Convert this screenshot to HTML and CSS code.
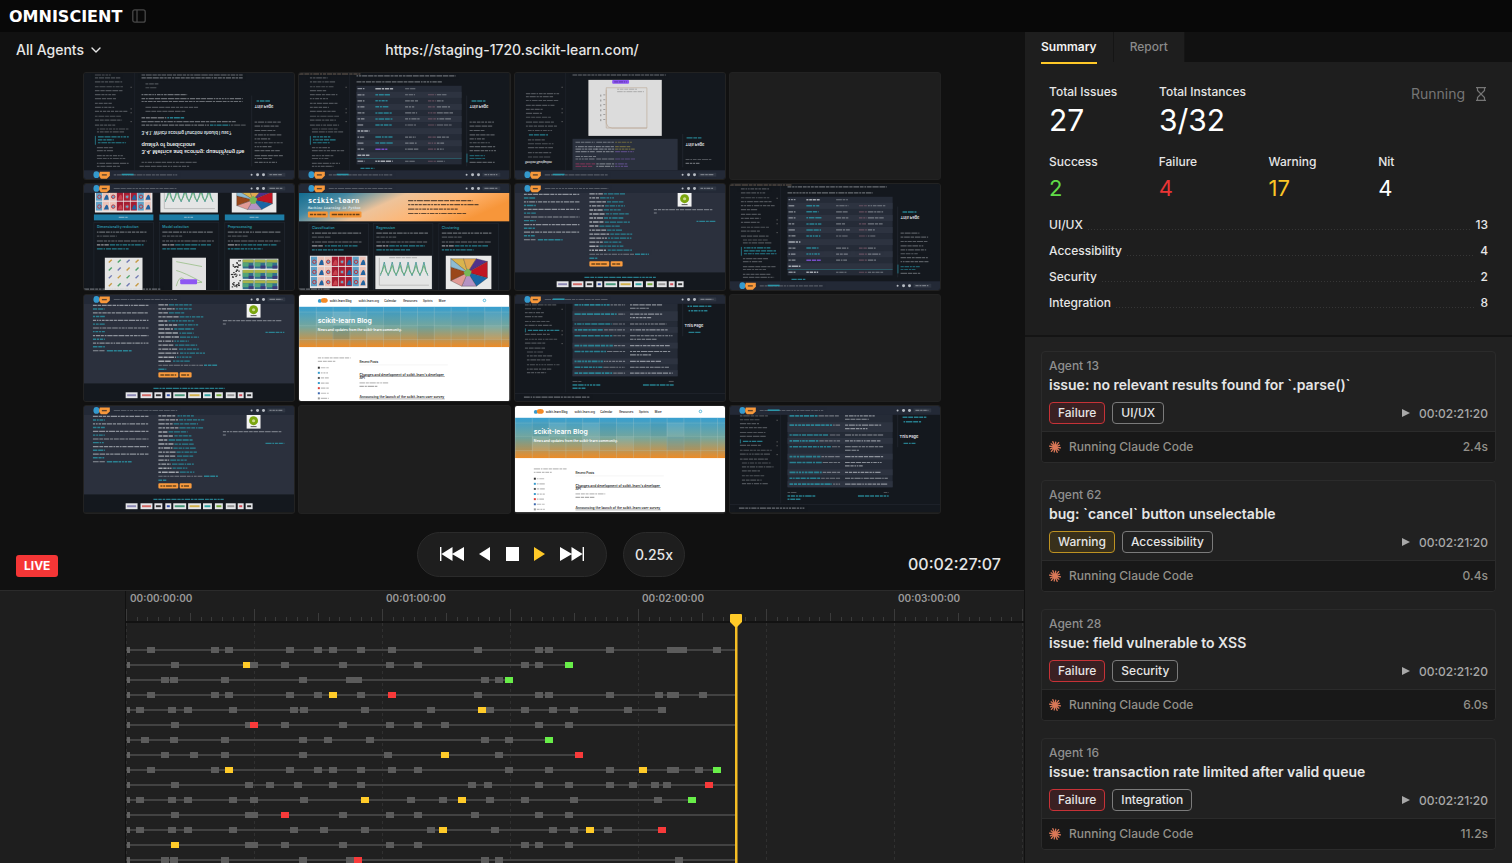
FILE: index.html
```html
<!DOCTYPE html>
<html lang="en">
<head>
<meta charset="utf-8">
<meta name="viewport" content="width=device-width, initial-scale=1">
<title>Omniscient</title>
<link rel="stylesheet" href="styles.css">
</head>
<body>
<div class="app">
  <header class="topbar">
    <h1 class="brand">OMNISCIENT</h1>
    <button class="icon-button" type="button" aria-label="Toggle sidebar">
      <svg width="14" height="14" viewBox="0 0 14 14" fill="none" stroke="#484848" stroke-width="1.3"><rect x="0.8" y="0.8" width="12.4" height="12.4" rx="2"/><path d="M5 1v12"/></svg>
    </button>
  </header>

  <div class="workspace">
    <main class="stage">
      <div class="stage-head">
        <button class="agents" type="button">All Agents
          <svg width="10" height="6" viewBox="0 0 10 6" fill="none" stroke="currentColor" stroke-width="1.4" stroke-linecap="round" stroke-linejoin="round"><path d="M1 1l4 4 4-4"/></svg>
        </button>
        <a class="url" href="#stage">https://staging-1720.scikit-learn.com/</a>
      </div>

      <div class="feeds" id="stage"></div>

      <div class="controls">
        <span class="live">LIVE</span>
        <div class="transport">
          <button type="button" aria-label="Skip to start"><svg width="24" height="14" viewBox="0 0 24 14" fill="currentColor"><path d="M0 0h1.4v14H0zM12.5 0v14L1.4 7zM24 0v14L12 7z"/></svg></button>
          <button type="button" aria-label="Play backward"><svg width="11" height="14" viewBox="0 0 11 14" fill="currentColor"><path d="M11 0v14L0 7z"/></svg></button>
          <button type="button" aria-label="Stop"><svg width="13" height="14" viewBox="0 0 13 14" fill="currentColor"><path d="M0 0h13v14H0z"/></svg></button>
          <button class="on" type="button" aria-label="Play"><svg width="11" height="14" viewBox="0 0 11 14" fill="currentColor"><path d="M0 0v14l11-7z"/></svg></button>
          <button type="button" aria-label="Skip to end"><svg width="24" height="14" viewBox="0 0 24 14" fill="currentColor"><path d="M22.6 0H24v14h-1.4zM11.5 0v14l11.1-7zM0 0v14l12-7z"/></svg></button>
        </div>
        <div class="controls-end">
          <button class="speed" type="button">0.25x</button>
          <span class="clock">00:02:27:07</span>
        </div>
      </div>

      <section class="timeline" aria-label="Timeline">
        <div class="track-labels"></div>
        <div class="tracks">
          <svg class="ruler" id="ruler" height="32"></svg>
          <svg class="lanes" id="lanes"></svg>
          <svg class="playhead" width="12" height="252" viewBox="0 0 12 252"><path d="M5 8h2.5v244H5z" fill="#f5bd24"/><path d="M0 1q0-1 1-1h10q1 0 1 1v7l-5 5H5L0 8z" fill="#ffca28"/></svg>
        </div>
      </section>
    </main>

    <aside class="side">
      <nav class="tabs">
        <button class="tab active" type="button"><span>Summary</span></button>
        <button class="tab" type="button"><span>Report</span></button>
      </nav>
      <section class="summary">
        <div class="totals">
          <dl class="stat big"><dt>Total Issues</dt><dd>27</dd></dl>
          <dl class="stat big"><dt>Total Instances</dt><dd>3/32</dd></dl>
          <p class="state">Running
            <svg width="10" height="14" viewBox="0 0 10 14" fill="none" stroke="currentColor" stroke-width="1.2"><path d="M0 .7h10M0 13.3h10M1.500 1v2.500L8.500 10.500V13M8.500 1v2.500L1.500 10.500V13"/></svg>
          </p>
        </div>
        <div class="counts">
          <dl class="stat"><dt>Success</dt><dd class="green">2</dd></dl>
          <dl class="stat"><dt>Failure</dt><dd class="red">4</dd></dl>
          <dl class="stat"><dt>Warning</dt><dd class="yellow">17</dd></dl>
          <dl class="stat"><dt>Nit</dt><dd>4</dd></dl>
        </div>
        <ul class="breakdown">
          <li><span>UI/UX</span><i></i><span>13</span></li>
          <li><span>Accessibility</span><i></i><span>4</span></li>
          <li><span>Security</span><i></i><span>2</span></li>
          <li><span>Integration</span><i></i><span>8</span></li>
        </ul>
      </section>
      <section class="issues" id="issues"></section>
    </aside>
  </div>
</div>
<script src="app.js"></script>
</body>
</html>
```

FILE: styles.css
```css
* { box-sizing: border-box; }
body {
  margin: 0;
  background: #111;
  color: #e6e6e6;
  font-family: Inter, "Liberation Sans", sans-serif;
  font-size: 12px;
  font-weight: 500;
}
button { margin: 0; padding: 0; border: 0; background: none; color: inherit; font: inherit; }
svg { display: block; }
h1, h2, p, dl, dd, ul { margin: 0; padding: 0; }
.app { display: flex; flex-direction: column; height: 100vh; overflow: hidden; }

.topbar { display: flex; align-items: center; gap: 10px; height: 32px; padding: 0 9px; background: #080808; flex: none; }
.brand { font: 700 16px "DejaVu Sans", sans-serif; color: #fff; }

.workspace { display: flex; flex: 1; min-height: 0; }
.stage { display: flex; flex-direction: column; flex: 1; min-width: 0; }
.stage-head { display: grid; grid-template-columns: 1fr auto 1fr; align-items: center; height: 35px; padding: 0 16px; flex: none; font-size: 14px; }
.agents { display: flex; align-items: center; gap: 7px; }
.url { color: #e6e6e6; text-decoration: none; }

.feeds { display: grid; grid-template-columns: repeat(4, 1fr); gap: 3px; width: 84%; max-width: 858px; margin: 5px auto 0; flex: none; }
.feed { aspect-ratio: 212 / 108; border: 1px solid #222; border-radius: 3px; overflow: hidden; background: #1e1e1e; }
.feed svg { width: 100%; height: 100%; }
.feed .sans { font-family: Inter, sans-serif; font-weight: 600; }
.feed .mono { font-family: "DejaVu Sans Mono", monospace; font-weight: 700; }

.controls { display: grid; grid-template-columns: 1fr auto 1fr; align-items: end; padding: 18px 16px 13px; flex: none; }
.live { justify-self: start; padding: 0 8px; border-radius: 3px; background: #f53636; color: #fff; font-weight: 700; line-height: 22px; }
.transport { display: flex; align-items: center; justify-content: space-between; width: 190px; height: 45px; padding: 0 22px; border: 1px solid #2b2b2b; border-radius: 23px; background: #1e1e1e; color: #fff; }
.transport .on { color: #ffc928; }
.controls-end { display: flex; align-items: center; justify-content: space-between; padding: 0 7px 0 16px; }
.speed { width: 62px; height: 45px; border: 1px solid #2b2b2b; border-radius: 23px; background: #1e1e1e; font-size: 14px; }
.clock { align-self: end; font-size: 16px; line-height: 25px; }

.timeline { display: flex; flex: 1; min-height: 0; border-top: 1px solid #2b2b2b; }
.track-labels { width: 126px; flex: none; background: #1e1e1e; border-right: 1px solid #111; }
.tracks { display: flex; flex-direction: column; position: relative; flex: 1; min-width: 0; overflow: hidden; background: #202020; }
.ruler { width: 100%; height: 32px; flex: none; background: #1e1e1e; border-bottom: 2px solid #121212; }
.ruler text { font-size: 10px; font-weight: 600; fill: #9a9a9a; }
.lanes { width: 100%; flex: 1; min-height: 0; }
.playhead { position: absolute; left: 604px; top: 23px; }

.side { display: flex; flex-direction: column; width: 488px; flex: none; border-left: 1px solid #111; background: #212121; }
.tabs { display: flex; position: relative; z-index: 1; height: 30px; flex: none; background: #111; }
.tab { padding: 0 16px; border-right: 1px solid #151515; background: #1e1e1e; color: #8a8a8a; }
.tab span { display: block; height: 32px; line-height: 30px; margin-bottom: -2px; }
.tab.active { color: #f2f2f2; font-weight: 600; }
.tab.active span { border-bottom: 2px solid #ffc928; }
.summary { padding: 21px 24px 19px; background: #1e1e1e; border-bottom: 2px solid #141414; }
.totals { display: flex; align-items: start; }
.counts { display: flex; margin-top: 14px; }
.stat { width: 110px; }
.stat dt { line-height: 18px; }
.stat dd { font-size: 22px; font-weight: 400; line-height: 26px; margin-top: 4px; color: #fff; }
.stat.big dd { font-size: 30px; line-height: 38px; margin-top: 0; }
.state { display: flex; align-items: center; gap: 11px; margin-left: auto; padding: 2px 2px 0 0; color: #757575; font-size: 14px; font-weight: 400; line-height: 18px; }
.stat .green { color: #60dc48; }
.stat .red { color: #e93535; }
.stat .yellow { color: #fcc526; }
.breakdown { list-style: none; margin-top: 11px; }
.breakdown li { display: flex; align-items: center; gap: 5px; line-height: 26px; }
.breakdown i { flex: 1; height: 10px; background: repeating-linear-gradient(90deg, #363636 0 1px, transparent 1px 3px) bottom / 100% 1px no-repeat; }

.issues { display: flex; flex-direction: column; gap: 17px; padding: 14px 16px; }
.card { flex: none; border: 1px solid #2b2b2b; border-radius: 4px; background: #212121; overflow: hidden; }
.card-body { padding: 5px 7px 7px; border-bottom: 1px solid #2b2b2b; }
.agent { color: #8f8f8f; line-height: 18px; }
.card h2 { font-size: 14px; font-weight: 600; line-height: 20px; color: #e6e6e6; }
.card-row { display: flex; align-items: center; gap: 7px; margin-top: 7px; }
.tag { padding: 0 8px; border: 1px solid #7b7b7b; border-radius: 4px; line-height: 20px; }
.tag.failure { border-color: #c73237; background: #3a2022; }
.tag.warning { border-color: #bd9222; background: #38301b; }
.jump { display: flex; align-items: center; gap: 9px; margin-left: auto; color: #a8a8a8; }
.card-foot { display: flex; align-items: center; gap: 8px; padding: 0 7px; line-height: 30px; background: #181818; color: #929089; }
.card-foot time { margin-left: auto; }
```

FILE: app.js
```js
// ---------- issue cards ----------
const issues = [
  [13, 'issue: no relevant results found for `.parse()`', 'Failure', 'UI/UX', '2.4s'],
  [62, 'bug: `cancel` button unselectable', 'Warning', 'Accessibility', '0.4s'],
  [28, 'issue: field vulnerable to XSS', 'Failure', 'Security', '6.0s'],
  [16, 'issue: transaction rate limited after valid queue', 'Failure', 'Integration', '11.2s'],
];
let rays = '';
for (let i = 0; i < 12; i++) {
  const a = i * Math.PI / 6 + 0.15, r = i % 2 ? 5.4 : 6.2;
  rays += `M6.500 6.500L${(6.5 + r * Math.cos(a)).toFixed(1)} ${(6.5 + r * Math.sin(a)).toFixed(1)}`;
}
document.getElementById('issues').innerHTML = issues.map(([n, title, level, area, took]) => `
  <article class="card">
    <div class="card-body">
      <p class="agent">Agent ${n}</p>
      <h2>${title}</h2>
      <div class="card-row">
        <span class="tag ${level.toLowerCase()}">${level}</span><span class="tag">${area}</span>
        <button class="jump" type="button"><svg width="8" height="8" viewBox="0 0 8 8" fill="currentColor"><path d="M0 0v8l8-4z"/></svg>00:02:21:20</button>
      </div>
    </div>
    <div class="card-foot"><svg width="12" height="12" viewBox="0 0 13 13" stroke="#d97757" stroke-width="1.4" stroke-linecap="round"><path d="${rays}"/></svg><span>Running Claude Code</span><time>${took}</time></div>
  </article>`).join('');

// ---------- timeline ----------
const rect = (x, y, w, h, fill, extra = '') => `<rect x="${x}" y="${y}" width="${w}" height="${h}" fill="${fill}" ${extra}/>`;
const STEP = 128; // pixels per 30 seconds
let ruler = '', lanes = '';
for (let i = 0; i < 12 * 12; i++) {
  const x = Math.round(i * STEP / 12);
  const h = i % 12 === 0 ? 12 : i % 6 === 0 ? 8 : 4;
  ruler += rect(x, 30 - h, 1, h, '#3b3b3b');
}
for (let i = 0; i < 4; i++) {
  ruler += `<text x="${i * 2 * STEP + 4}" y="11">00:0${i}:00:00</text>`;
}
for (let i = 0; i < 12; i++) {
  lanes += `<path d="M${i * STEP + 0.5} 0v900" stroke="#303030" stroke-dasharray="3 3"/>`;
}
// Each entry is an event's centre; a letter marks its result. The last value is where the lane ends.
const rows = [
  '25 89 103 164 192 207 235 266 352 413 423 484 545 553 557 591 |610',
  '49 y121 128 159 217 264 292 399 413 g443 |443',
  '39 48 99 177 224 232 359 373 g383 |383',
  '25 89 103 164 192 y207 235 r266 352 413 423 484 533 545 549 577 |610',
  '14 46 62 107 168 178 239 305 364 y356 399 427 448 502 536 |536',
  '49 123 r128 159 217 264 292 319 413 443 |610',
  '19 48 99 177 202 244 359 383 g423 |423',
  '39 68 99 177 262 y319 373 r453 |453',
  '25 89 y103 164 192 207 235 266 292 383 423 484 y517 545 549 573 g591 |591',
  '49 123 144 172 207 235 346 362 413 443 484 507 529 541 r583 |610',
  '14 46 62 107 128 178 y239 285 317 y336 364 399 448 532 g566 |566',
  '49 123 128 r159 217 264 292 349 413 443 |610',
  '14 46 62 107 168 198 239 305 y317 369 427 448 y464 482 r536 |536',
  'y49 123 128 159 217 264 292 399 413 443 |610',
  '39 48 99 177 224 r232 359 373 553 |610',
  '25 89 103 164 192 207 |610',
];
const tone = { y: '#ffcb29', r: '#f83a3a', g: '#68ee49' };
rows.forEach((row, i) => {
  const y = 27 + i * 15;
  const [events, end] = row.split('|');
  lanes += rect(0, y - 1, +end, 2, '#424242') + rect(1, y - 3, 3, 6, '#636363');
  events.trim().split(' ').forEach(e => {
    const c = tone[e[0]];
    lanes += rect((c ? +e.slice(1) : +e) - 4, y - 3, 8, 6, c || '#5c5c5c');
  });
});
document.getElementById('ruler').innerHTML = ruler;
document.getElementById('lanes').innerHTML = lanes;

// ---------- agent feeds ----------
const W = 212, H = 108;
const TEXT = '#8d9298', LIGHT = '#c5cad0', TEAL = '#2b96a8', BG = '#14181e', NAV = '#232936';
let seed = 7;
const rnd = () => (seed = (seed * 16807) % 2147483647) / 2147483647;

// A row of greeked words.
function words(x, y, w, fill = TEXT, h = 1, alpha = 0.6) {
  let d = '', at = x;
  while (at < x + w - 0.5) {
    const len = Math.min(1.5 + rnd() * 5, x + w - at);
    d += `M${at.toFixed(1)} ${y}h${len.toFixed(1)}`;
    at += len + 0.8;
  }
  return `<path d="${d}" stroke="${fill}" stroke-width="${h + 0.2}" opacity="${alpha * 0.8}"/>`;
}
const label = (x, y, size, fill, text, cls = 'sans') => `<text class="${cls}" x="${x}" y="${y}" font-size="${size}" fill="${fill}">${text}</text>`;
const flipped = (x, y, size, fill, text) => `<g transform="translate(0 ${y}) scale(1 -1)">${label(x, 0, size, fill, text)}</g>`;

function nav(y, docs) {
  return rect(0, y, W, 9, NAV) +
    `<ellipse cx="12.500" cy="${y + 4.5}" rx="3" ry="3.400" fill="#3499cd"/><path d="M16 ${y + 1.5}h10v4l-3 3h-6q-3-3-1-7z" fill="#f7983b"/>` +
    rect(18, y + 4, 5, 1.4, '#5f442c') + words(30, y + 4.6, 64, TEXT) +
    (docs ? rect(38, y + 3.5, 12, 1.6, TEAL) : '') +
    `<g fill="#b8bdc4"><circle cx="169" cy="${y + 4.5}" r="1"/><circle cx="175" cy="${y + 4.5}" r="1.500"/><circle cx="181" cy="${y + 4.5}" r="1.500"/></g>` +
    rect(185, y + 2.5, 18, 4, '#303744') + words(187, y + 4.5, 13, LIGHT);
}
const page = body => rect(0, 0, W, H, BG) + body;

function sidebar(ys, teal = [], x = 11) {
  return ys.map(y => words(teal.includes(y) ? x + 3 : x + (y > 54 ? 2 : 0), y, 16 + rnd() * 18, teal.includes(y) ? TEAL : TEXT, 1, teal.includes(y) ? 1 : 0.6)).join('') +
    [14, 36, 40, 49].map(y => rect(47, y, 1, 1, '#777')).join('') + rect(51, 0, 0.5, 99, '#242a32');
}
const leftYs = [2, 5, 9, 14, 18, 22, 26, 31, 35, 39, 44, 48, 53, 57, 60, 65, 68, 71, 76, 79, 84, 87, 92, 95];
const tealYs = [65, 68, 71];

function rightToc(ys, teal = []) {
  return words(174, 28.5, 14, TEAL, 1.2, 1) + flipped(172, 32.5, 4, '#e3e5e8', 'This Page') + rect(169, 23, 0.5, 72, '#2c323a') +
    ys.map(y => words(172, y, 15 + rnd() * 14, teal.includes(y) ? TEAL : TEXT, 1, 0.7)).join('');
}
const tocYs = [50, 54, 58.5, 63, 67, 71, 75, 79, 84, 87, 91];

function proseFlipped() {
  return page(sidebar(leftYs, tealYs) + rect(11, 64, 0.7, 9, TEAL) +
    [2, 5, 26, 29].map(y => words(58, y, 102, LIGHT)).join('') +
    words(62, 11, 13) + words(62, 15, 11) + words(58, 22, 46, LIGHT) +
    words(62, 35, 54) + words(62, 39, 40) +
    words(58, 45.5, 25, LIGHT, 1.3) + words(84, 45.5, 17, TEAL, 1.3, 1) +
    words(58, 49.5, 95, LIGHT) + words(58, 53, 68, LIGHT) + words(127, 53, 20, TEAL, 1.2, 1) + words(148, 53, 15) +
    flipped(58, 59, 4.4, '#dfe2e6', '3.4.1. Which scoring function should I use?') +
    flipped(58, 71, 5.3, '#eef0f2', 'quality of predictions') +
    flipped(58, 78, 5.3, '#eef0f2', '3.4. Metrics and scoring: quantifying the') +
    words(58, 91, 56) + words(56, 95, 50) + rightToc(tocYs) + nav(99, true));
}

function tableFlipped() {
  let s = words(58, 3, 100, LIGHT) + words(58, 9, 86, LIGHT) + rect(58, 13, 106, 80, '#252b37');
  for (let i = 0; i < 13; i++) {
    const y = 13 + i * 6.15;
    if (i % 2) s += rect(58, y, 106, 6.15, '#2d3340');
    if (i === 7 || i === 11) { s += words(59, y + 3, 12, LIGHT, 1.2, 1); continue; }
    const teal = i > 0 && i < 12;
    s += words(59, y + 3, 7, LIGHT, 1.1, 0.8) +
      words(77, y + 3, 11 + rnd() * 8, i === 10 ? '#8a55ea' : teal ? TEAL : LIGHT, 1.3, 1) +
      words(107, y + 3, 8 + rnd() * 7, LIGHT);
    if (i) s += words(130, y + 3, 8, '#a77486') + words(139, y + 3, 6 + rnd() * 12, LIGHT);
  }
  return page(words(0, 1, 62, '#c9a889') + sidebar(leftYs.slice(1), tealYs) + rect(11, 64, 0.7, 9, TEAL) + s +
    rect(58, 86.5, 106, 0.7, '#2e6c78') + words(62, 97, 14, TEAL, 1.2, 1) + rightToc(tocYs, [84, 87]) + rect(169, 82, 0.7, 9, TEAL) + nav(99, true));
}

function plotFlipped() {
  let code = '';
  [70.5, 75, 77.5, 80, 85, 87.5, 92.5, 95].forEach((y, i) => {
    code += words(61, y, 14 + rnd() * 8, i > 5 ? '#c43a6b' : LIGHT) + (i === 4 ? '' : words(82, y, 18, LIGHT) + words(101, y, 8 + rnd() * 14, i < 3 ? '#b4a445' : '#8b68c9'));
  });
  return page(sidebar([21, 24, 28, 33, 37, 41, 45, 50, 54, 58.5, 63, 68, 72, 76, 81, 85.5], [63]) +
    flipped(10, 90, 3, '#e3e5e8', 'Section Navigation') +
    words(58, 2, 94, LIGHT) + rect(74, 7, 74, 57, '#dcdcdc') +
    `<path d="M92 15h41v41H92zM92 17v34l2 4 4 1h35" fill="none" stroke="#b9a591" stroke-width=".6"/>` +
    words(103, 16.5, 20, '#777', 0.8) + words(103, 19, 27, '#777', 0.8) +
    [22, 27, 32, 37, 42, 47].map(y => rect(86, y, 1, 2, '#8b8b8b') + rect(89, y, 2, 0.6, '#777')).join('') +
    rect(98, 7, 17, 4, '#8b53f1', 'rx="1"') + words(100, 9, 13, '#3d2473') +
    rect(58, 67, 106, 32, '#2a303d') + code +
    words(173, 66, 15, TEAL, 1.2, 1) + flipped(172, 71, 4, '#e3e5e8', 'This Page') + rect(169, 62, 0.5, 34, '#2c323a') +
    words(172, 88, 26) + words(172, 92, 14, LIGHT) + nav(99, true));
}

// Small stand-ins for the example plots.
function classifierPlot(x, y, w, h) {
  let s = rect(x, y, w, h, '#e9e6e6');
  const cols = 8, rowsN = Math.round(h / 10), cw = (w - 2) / cols, ch = (h - 2) / rowsN;
  for (let r = 0; r < rowsN; r++) for (let c = 0; c < cols; c++) {
    const blue = (r * 3 + c * 5) % 3 === 0, cx = x + 1 + c * cw, cy = y + 1 + r * ch;
    s += rect(cx, cy, cw - 0.7, ch - 1, c > 2 && c < 6 ? '#a51d32' : blue ? '#5f9fc4' : '#ecc3b8') +
      (c % 2 ? `<path d="M${cx + 1} ${cy + ch - 2}q${cw / 2} ${-ch} ${cw - 2} 0z" fill="${blue ? '#c84450' : '#23639e'}"/>` :
        `<circle cx="${cx + cw / 2}" cy="${cy + ch / 2}" r="${cw / 4}" fill="#6fa6cb" stroke="#b53a43"/>`);
  }
  return s;
}
function wavePlot(x, y, w, h) {
  let d = `M${x + 5} ${y + h * 0.6}`, e = `M${x + 5} ${y + h * 0.55}`;
  for (let i = 0; i < 6; i++) {
    d += 'l2 -6 2 -8 2 9 2 5';
    e += 'l2 -3 2 -6 2 7 2 2';
  }
  return rect(x, y, w, h, '#e4e5e5') + `<path d="M${x + 4} ${y + 2}v${h - 6}h${w - 7}" fill="none" stroke="#999" stroke-width=".5"/><g fill="none" stroke-width=".9"><path d="${d}" stroke="#4c9698"/><path d="${e}" stroke="#6aae74"/></g>` +
    words(x + 14, y + 2, 28, '#777', 0.8);
}
function voronoiPlot(x, y, w, h) {
  const cx = x + w * 0.48, cy = y + h * 0.5, pts = [[0, 0], [0.35, 0], [0.7, 0], [1, 0.1], [1, 0.7], [0.7, 1], [0.3, 1], [0, 0.8], [0, 0.3]];
  const fills = ['#d9b44e', '#e2a852', '#51318b', '#c11523', '#1967a6', '#b493c4', '#e19a96', '#9a471a', '#8dbcd3'];
  const p = q => `${x + 5 + q[0] * (w - 9)} ${y + 3 + q[1] * (h - 6)}`;
  return rect(x, y, w, h, '#e9e9e9') + pts.map((q, i) => `<path d="M${cx} ${cy}L${p(q)} ${p(pts[(i + 1) % 9])}z" fill="${fills[i]}" stroke="#333" stroke-width=".3"/>`).join('') +
    `<path d="M${cx - 4} ${cy}l4-4 4 3-2 5h-4z" fill="#75b856"/>`;
}
function card(x, y, w, title, lineW) {
  return `<rect x="${x}" y="${y}" width="${w}" height="80" fill="none" stroke="#232a33" stroke-width=".6"/>` + label(x + 3, y + 5.5, 3.5, TEAL, title) +
    words(x + 3, y + 10, lineW, LIGHT) + words(x + 3, y + 14, 20) +
    words(x + 3, y + 19, lineW, LIGHT) + words(x + 3, y + 23, 12, LIGHT, 1.2, 0.9) + words(x + 16, y + 23, lineW - 16, TEAL, 1.2, 1) + words(x + 3, y + 27, lineW - 18, TEAL, 1.2, 1);
}

function gallery() {
  let dots = rect(21, 75, 38, 33, '#e4e4e4');
  for (let r = 0; r < 4; r++) for (let c = 0; c < 4; c++) dots += `<path d="M${25 + c * 9} ${80 + r * 8}l3-3" stroke="${['#c69a45', '#4fa36b', '#7079b2'][(r + c) % 3]}" stroke-width="1.400"/>`;
  let tiles = rect(147, 76, 49, 32, '#e8e8e8');
  for (let r = 0; r < 3; r++) {
    for (let i = 0; i < 14; i++) tiles += rect((148 + rnd() * 9).toFixed(1), (77 + r * 10 + rnd() * 8).toFixed(1), 1.5, 1.2, '#333');
    for (let c = 0; c < 3; c++) tiles += rect(160 + c * 12, 77 + r * 10.5, 11, 9, '#31708b') + rect(160 + c * 12, 77 + r * 10.5, 11, 3, '#a9b34c') + rect(160 + c * 12, 80 + r * 10.5, 6, 4, '#53a477') + rect(166 + c * 12, 83 + r * 10.5, 5, 3, '#3d3a78');
  }
  return page(classifierPlot(11, 7, 58, 22) + wavePlot(77, 2, 58, 27) + voronoiPlot(149, 3, 45, 26) +
    [10, 76, 142].map(x => rect(x, 31, 60, 6, '#1d7ca5') + words(x + 25, 34, 9, '#d5e4ec', 1.2)).join('') +
    card(10, 39, 60, 'Dimensionality reduction', 50) + card(76, 39, 60, 'Model selection', 52) + card(142, 39, 60, 'Preprocessing', 53) +
    dots + rect(89, 75, 34, 33, '#e2e2e2') + `<path d="M93 79l26 5M93 104q3-12 8-7t18 3M93 88q8 2 26 12" fill="none" stroke="#8cb878" stroke-width=".7"/>` + rect(97, 97, 17, 5, '#8e56f2', 'rx="1"') +
    tiles + words(0, 107, 77, LIGHT, 1) + nav(0));
}

function home() {
  return page(`<defs><linearGradient id="warm" x1="0" y1="0" x2="1" y2=".3"><stop offset="0" stop-color="#116b8f"/><stop offset=".22" stop-color="#4589a3"/><stop offset=".48" stop-color="#eec39a"/><stop offset=".75" stop-color="#ffb572"/><stop offset="1" stop-color="#f7963a"/></linearGradient></defs>` +
    rect(0, 9, W, 29, 'url(#warm)') + label(9, 19, 7.2, '#fff', 'scikit-learn', 'mono') + label(9, 25.5, 3.4, '#dbe9ee', 'Machine Learning in Python', 'mono" font-style="italic') +
    rect(9, 28, 20, 6, '#f79637', 'rx="1"') + rect(31, 28, 32, 6, '#f79637', 'rx="1"') + words(11, 31, 16, '#33230f', 1.3, 0.9) + words(33, 31, 28, '#33230f', 1.3, 0.9) +
    [[17, 65], [21, 71], [25.5, 50], [30, 59]].map(([y, w]) => words(110, y, w, '#2a211a', 1, 0.9)).join('') +
    card(10, 40, 60, 'Classification', 50) + card(75, 40, 60, 'Regression', 52) + card(141, 40, 60, 'Clustering', 50) +
    classifierPlot(11, 73, 58, 33) + wavePlot(77, 73, 57, 34) + voronoiPlot(148, 73, 46, 34) + words(0, 107, 32, LIGHT, 1) + nav(0));
}

function footerPage() {
  let s = rect(0, 0, W, 90, '#2b303d');
  for (let i = 0; i < 7; i++) {
    s += words(9, 13 + i * 7.7 - 2.5, i === 6 ? 12 : 56, LIGHT, 1, 0.8) + (i < 6 ? words(9, 13 + i * 7.7 + 1.2, 12, TEAL, 1.2, 1) : '');
  }
  s += words(23, 56.7, 25, TEAL, 1.2, 1);
  for (let i = 0; i < 15; i++) {
    const a = 9 + rnd() * 12;
    s += words(75, 10 + i * 4.1, a, LIGHT, 1.2, 0.95) + words(76 + a, 10 + i * 4.1, 14 + rnd() * 12, TEAL, 1.1, 1);
  }
  s += words(75, 71.5, 45, LIGHT) + words(121, 71.5, 14, TEAL, 1.2, 1) + words(75, 75.5, 8, TEAL, 1.2, 1) +
    rect(75, 78.5, 20, 5.5, '#f99b3e', 'rx="1"') + rect(96.5, 78.5, 12, 5.5, '#f99b3e', 'rx="1"') + words(77, 81.3, 16, '#33230f', 1.3, 0.9) + words(98, 81.3, 8, '#33230f', 1.3, 0.9) +
    rect(164, 9, 14, 14, '#f2f2f2') + '<circle cx="171" cy="15" r="4.500" fill="#7ba60f"/><circle cx="171" cy="15" r="1.600" fill="#cddb8e"/>' + rect(168, 20.5, 6, 1, '#555') +
    words(140, 26, 59, LIGHT) + words(140, 29.5, 3, LIGHT) + words(183, 38, 19, TEAL, 1.1, 1) +
    words(70, 95, 72, TEAL, 1.1, 1);
  const logos = [[42, 12, '#8c88b5'], [57, 12, '#d26a66'], [71, 8, '#333'], [82, 6, '#2f4da3'], [90, 13, '#469778'], [105, 13, '#d1b04c'], [120, 9, '#30a4a2'], [132, 8, '#75a838'], [143, 10, '#999'], [155, 6, '#d24c56'], [163, 7, '#333']];
  s += logos.map(([x, w, c]) => rect(x, 99, w, 6, '#e4e5e8') + rect(x + 1.5, 101, w - 3, 2, c)).join('');
  return page(s + nav(0));
}

function blog() {
  let s = rect(0, 0, W, H, '#fff') +
    `<defs><linearGradient id="sky" x1="0" y1="0" x2="0" y2="1"><stop offset="0" stop-color="#379fd0"/><stop offset=".5" stop-color="#77a69b"/><stop offset="1" stop-color="#ec8b27"/></linearGradient></defs>` +
    rect(0, 12, W, 41, 'url(#sky)');
  for (let x = 0; x < W; x += 17) s += rect(x, 12, 0.7, 41, '#b7d0cd', 'opacity=".35"');
  for (let y = 17; y < 53; y += 14) s += rect(0, y, W, 0.7, '#b7d0cd', 'opacity=".3"');
  for (let i = 0; i < 16; i++) s += rect(Math.floor(rnd() * 12) * 17, 17 + Math.floor(rnd() * 2) * 14, 17, 14, i % 2 ? '#fff' : '#0d6b8c', 'opacity=".08"');
  s += '<circle cx="21" cy="6" r="2" fill="#3499cd"/><ellipse cx="25.500" cy="5.500" rx="3.500" ry="2.500" fill="#f58a25"/>' +
    label(31, 7.3, 2.8, '#222', 'scikit-learn Blog') + label(60, 7.3, 2.8, '#333', 'scikit-learn.org') + label(86, 7.3, 2.8, '#333', 'Calendar') + label(105, 7.3, 2.8, '#333', 'Resources') + label(125, 7.3, 2.8, '#333', 'Sprints') + label(141, 7.3, 2.8, '#333', 'More') +
    '<circle cx="187" cy="5.500" r="1.300" fill="none" stroke="#3bacd4" stroke-width=".8"/>' +
    label(19, 28, 6.9, '#fff', 'scikit-learn Blog') + label(19, 37, 3.4, '#fff', 'News and updates from the scikit-learn community.') +
    words(19, 64, 33, '#777') + words(19, 67.5, 18, '#777');
  ['#333', '#3499cd', '#555', '#3499cd', '#dd403a', '#3a66ad', '#999'].forEach((c, i) => { s += rect(19, 73 + i * 5.2, 2, 2, c) + words(22, 74 + i * 5.2, 8, '#777'); });
  return s + label(61, 69.5, 3, '#222', 'Recent Posts') + rect(61, 71, 89, 0.4, '#e4e4e4') +
    label(61, 82, 3.3, '#222', "Changes and development of scikit-learn's developer") + rect(61, 82.6, 86, 0.4, '#444') + label(61, 86, 3.3, '#222', 'API') +
    words(61, 89.5, 30, '#777') + words(61, 93, 19, '#555') +
    label(61, 105, 3.3, '#222', 'Announcing the launch of the scikit-learn user survey') + rect(61, 105.6, 86, 0.4, '#444');
}

function apiPage() {
  const ys = [10, 19.5, 29.5, 35.5, 41.5, 51.5, 57.5, 67.5, 73.5, 79.5];
  let s = rect(58, 8, 106, 75, '#252b37');
  ys.forEach((y, i) => {
    const tall = [0, 1, 4, 6].includes(i);
    if (i % 2) s += rect(58, y - 3, 106, tall ? 10 : 6, '#2d3340');
    const w = 27 + rnd() * 17;
    s += words(60, y, w, TEAL, 1.5, 1) + words(61 + w, y, 50 - w, LIGHT) + words(116, y, 30 + rnd() * 14, LIGHT, 1, 0.8);
    if (tall) s += words(116, y + 3.5, 14 + rnd() * 15, LIGHT, 1, 0.8);
  });
  return page(sidebar([10, 14, 18, 22, 27, 31, 36, 40, 45, 49, 54, 58, 62, 66, 71, 75.5, 79], [36], 10) + s +
    rect(10, 34, 0.7, 4, TEAL) + words(174, 11.5, 24, TEAL, 1.3, 1) + words(175, 16, 19, TEAL, 1.3, 1) + label(171, 33, 4, '#e3e5e8', 'This Page') + words(175, 38, 13, TEAL, 1.1, 1) + rect(169, 9, 0.5, 33, '#2c323a') +
    words(58, 88, 9) + words(58, 91.5, 28, TEAL, 1.3, 1) + words(58, 95, 13, TEAL, 1.3, 1) + words(155, 88, 5) + words(129, 91.5, 31, TEAL, 1.3, 1) +
    rect(0, 100, W, 0.5, '#272d36') + words(9, 104, 66, LIGHT) + nav(0, true));
}

const feeds = [
  proseFlipped, tableFlipped, plotFlipped, null,
  gallery, home, footerPage, tableFlipped,
  footerPage, blog, apiPage, null,
  footerPage, null, blog, apiPage,
];
document.getElementById('stage').innerHTML = feeds.map(draw =>
  `<div class="feed">${draw ? `<svg viewBox="0 0 ${W} ${H}" preserveAspectRatio="none">${draw()}</svg>` : ''}</div>`).join('');
```
